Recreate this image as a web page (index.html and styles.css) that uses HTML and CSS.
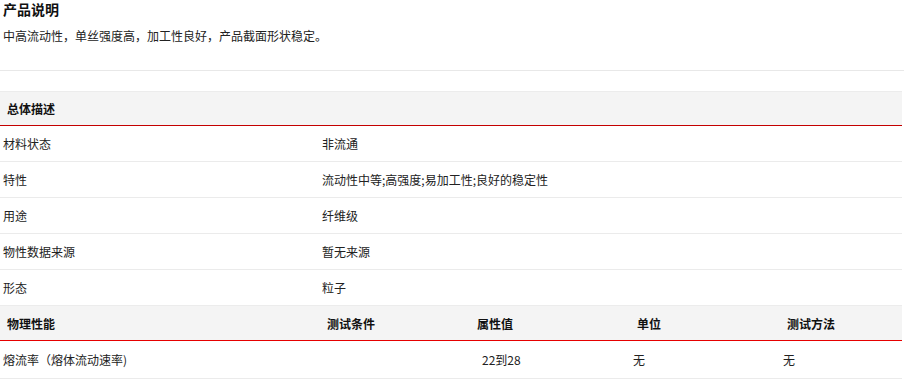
FILE: index.html
```html
<!DOCTYPE html>
<html lang="zh">
<head>
<meta charset="utf-8">
<link rel="stylesheet" href="styles.css">
</head>
<body>
<div class="page">
  <section class="intro">
    <h2 class="title">产品说明</h2>
    <p class="desc">中高流动性，单丝强度高，加工性良好，产品截面形状稳定。</p>
  </section>
  <div class="spacer"></div>
  <div class="table t1">
    <div class="head red-dark"><div class="th">总体描述</div></div>
    <div class="row"><div class="td">材料状态</div><div class="td">非流通</div></div>
    <div class="row"><div class="td">特性</div><div class="td">流动性中等;高强度;易加工性;良好的稳定性</div></div>
    <div class="row"><div class="td">用途</div><div class="td">纤维级</div></div>
    <div class="row"><div class="td">物性数据来源</div><div class="td">暂无来源</div></div>
    <div class="row last"><div class="td">形态</div><div class="td">粒子</div></div>
  </div>
  <div class="table t2">
    <div class="head red"><div class="th">物理性能</div><div class="th">测试条件</div><div class="th">属性值</div><div class="th">单位</div><div class="th">测试方法</div></div>
    <div class="row"><div class="td">熔流率（熔体流动速率)</div><div class="td"></div><div class="td num">22到28</div><div class="td">无</div><div class="td">无</div></div>
  </div>
</div>
</body>
</html>
```

FILE: styles.css
```css
* { box-sizing: border-box; }
body {
  margin: 0;
  background: #fff;
  color: #222;
  font-family: "Noto Sans CJK SC", "Noto Sans", sans-serif;
  font-size: 12px;
}
.page { width: 904px; }
.intro {
  padding: 0 3px;
  height: 71px;
  border-bottom: 1px solid #e8e8e8;
}
.title {
  margin: 0;
  font-size: 14px;
  font-weight: bold;
  line-height: 18px;
  color: #111;
}
.desc {
  margin: 9px 0 0;
  line-height: 18px;
}
.spacer { height: 20px; }
.table { width: 902px; }
.head {
  display: grid;
  height: 35px;
  background: #f4f4f4;
  border-top: 1px solid #ececec;
  align-items: center;
  font-weight: bold;
  color: #111;
}
.red-dark { border-bottom: 1px solid #c40000; }
.red { border-bottom: 1px solid #e60000; height: 36px; }
.th { padding-left: 7px; }
.row {
  display: grid;
  height: 36px;
  align-items: center;
  border-bottom: 1px solid #ebebeb;
}
.t1 .row { grid-template-columns: 319px 1fr; }
.t1 .row.last { border-bottom: none; height: 35px; }
.t1 .td { padding-left: 3px; }
.t2 .head, .t2 .row { grid-template-columns: 320px 150px 160px 150px 1fr; }
.t2 .row { height: 38px; }
.t2 .td { padding-left: 3px; }
.t2 .td.num { padding-left: 12px; }
```
